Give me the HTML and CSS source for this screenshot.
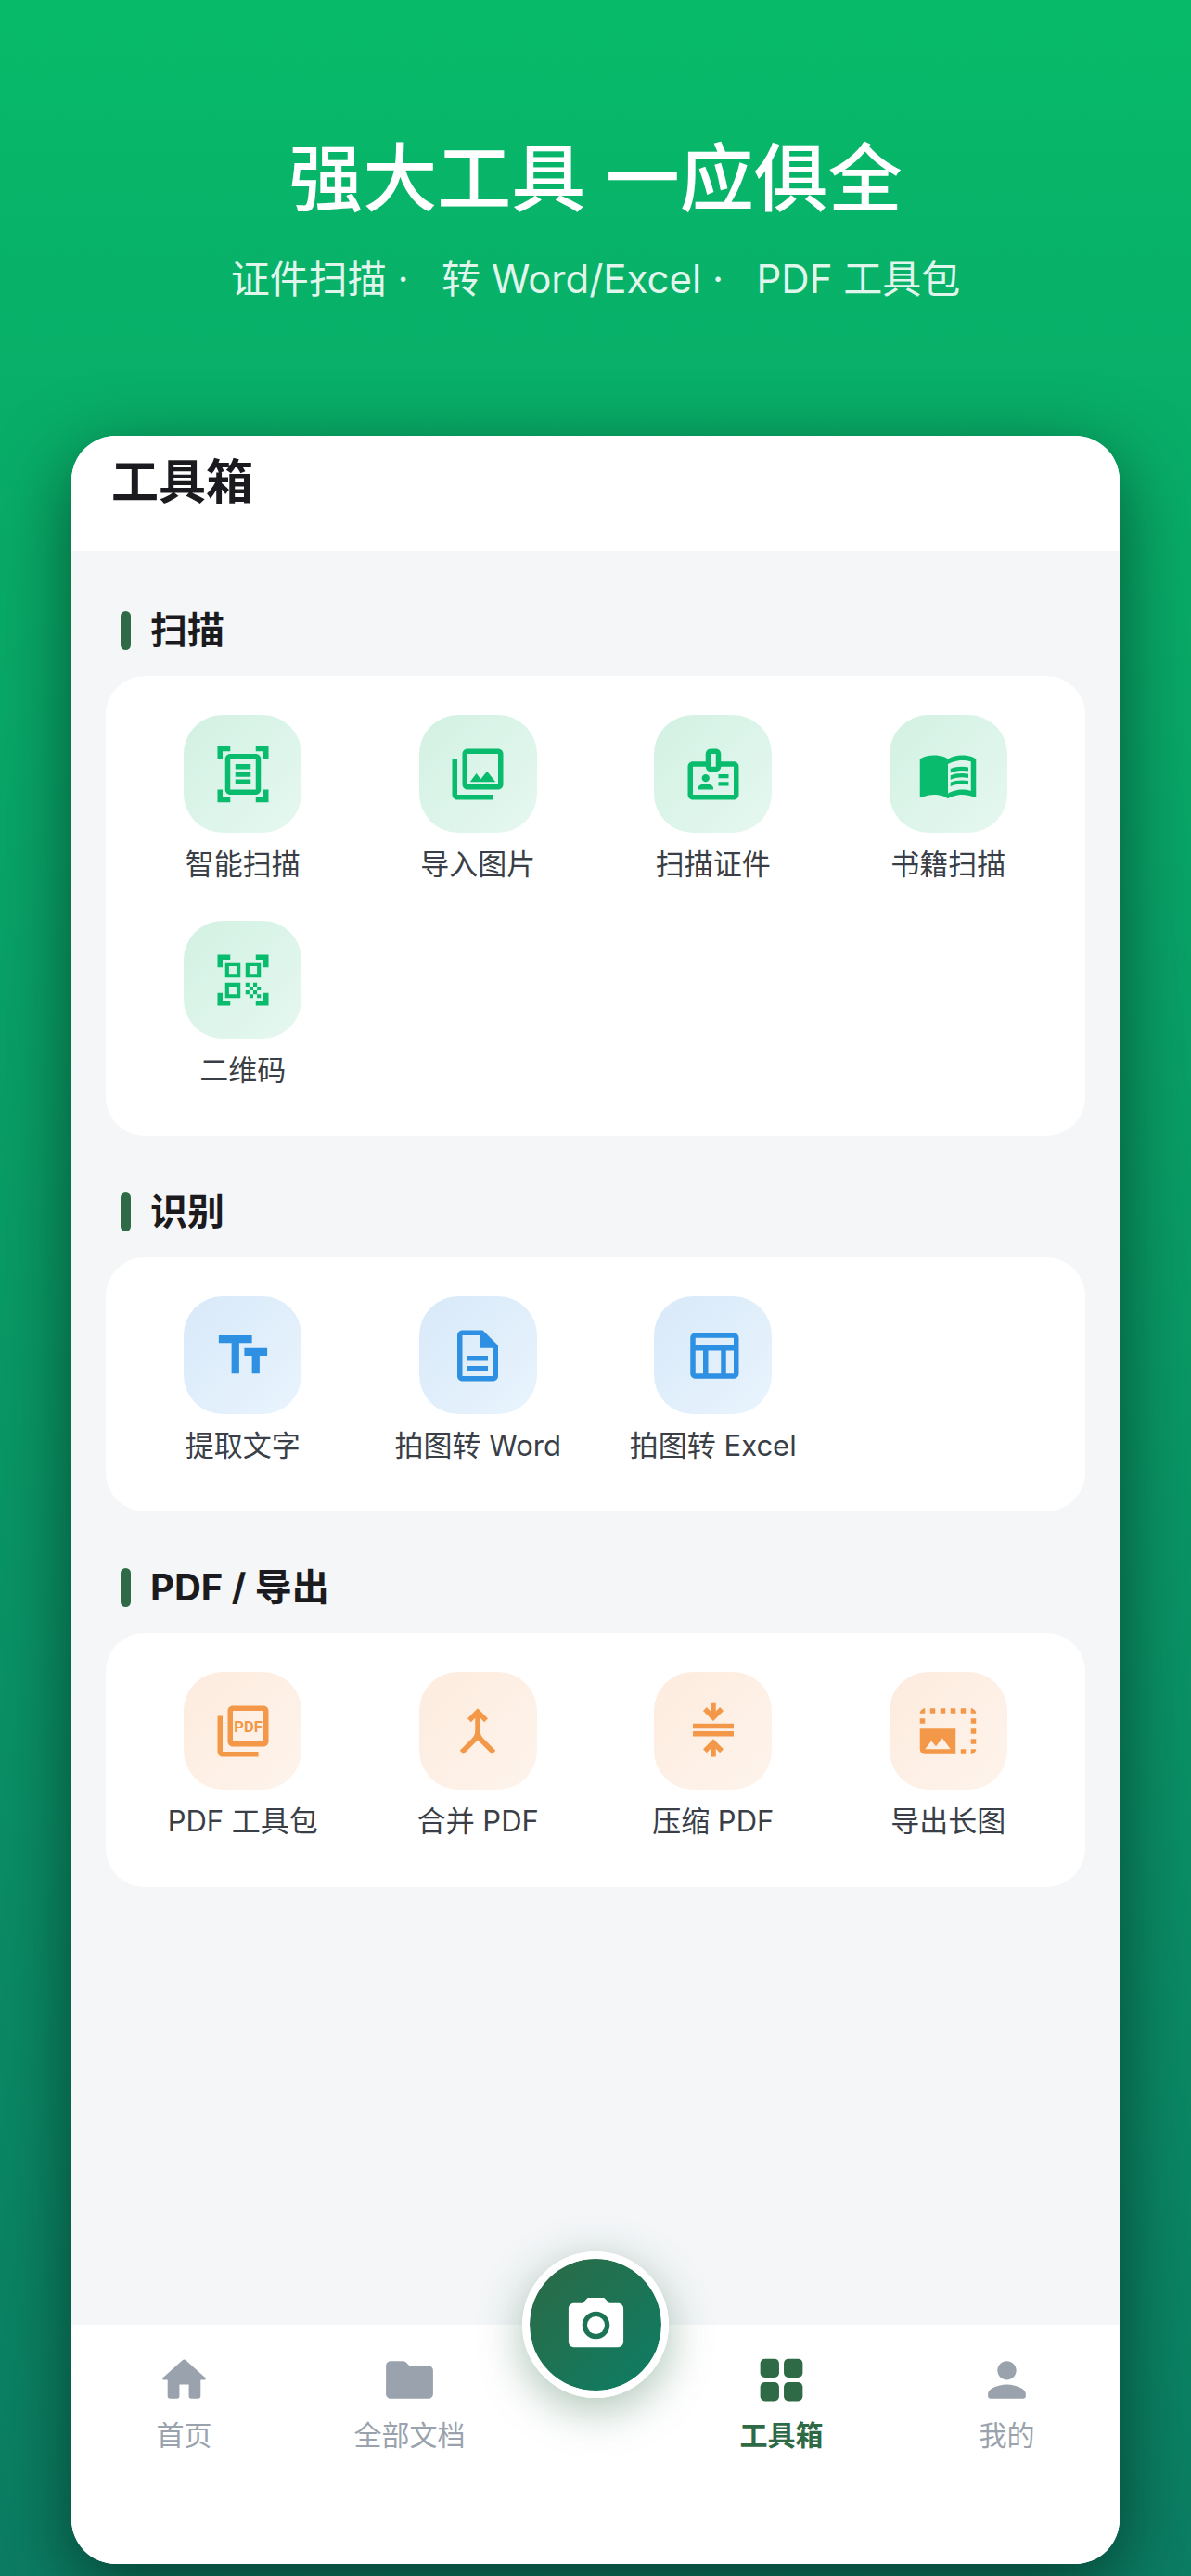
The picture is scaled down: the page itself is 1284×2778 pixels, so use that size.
FILE: index.html
```html
<!DOCTYPE html>
<html lang="zh-CN">
<head>
<meta charset="utf-8">
<meta name="viewport" content="width=device-width, initial-scale=1">
<title>工具箱</title>
<link rel="stylesheet" href="styles.css">
</head>
<body>
<div class="page">
  <header class="hero">
    <h1 class="hero-title">强大工具 一应俱全</h1>
    <p class="hero-sub">证件扫描 · &nbsp; 转 Word/Excel · &nbsp; PDF 工具包</p>
  </header>

  <div class="phone">
    <div class="topbar"><h2 class="topbar-title">工具箱</h2></div>

    <main class="content">
      <section class="section">
        <h3 class="section-title">扫描</h3>
        <div class="card tone-green">
          <button type="button" class="tool">
            <span class="tile"><svg class="icon" viewBox="0 0 24 24" fill-rule="evenodd" aria-hidden="true"><path d="M7 3H4v3H2V1h5v2zm15 3V1h-5v2h3v3h2zM7 21H4v-3H2v5h5v-2zm13-3v3h-3v2h5v-5h-2zM19 18c0 1.1-.9 2-2 2H7c-1.1 0-2-.9-2-2V6c0-1.1.9-2 2-2h10c1.1 0 2 .9 2 2v12zM17 6H7v12h10V6zM15 8H9v2h6V8zm0 3H9v2h6v-2zm0 3H9v2h6v-2z"/></svg></span>
            <span class="label">智能扫描</span>
          </button>
          <button type="button" class="tool">
            <span class="tile"><svg class="icon" viewBox="0 0 24 24" aria-hidden="true"><path d="M20 4v12H8V4h12m0-2H8c-1.1 0-2 .9-2 2v12c0 1.1.9 2 2 2h12c1.1 0 2-.9 2-2V4c0-1.1-.9-2-2-2zm-8.5 9.67l1.69 2.26 2.48-3.1L19 15H9zM2 6v14c0 1.1.9 2 2 2h14v-2H4V6H2z"/></svg></span>
            <span class="label">导入图片</span>
          </button>
          <button type="button" class="tool">
            <span class="tile"><svg class="icon" viewBox="0 0 24 24" aria-hidden="true"><path fill-rule="evenodd" d="M20 7h-5V4c0-1.1-.9-2-2-2h-2c-1.1 0-2 .9-2 2v3H4c-1.1 0-2 .9-2 2v11c0 1.1.9 2 2 2h16c1.1 0 2-.9 2-2V9c0-1.1-.9-2-2-2zM11 4h2v5h-2V4zm9 16H4V9h5c0 1.1.9 2 2 2h2c1.1 0 2-.9 2-2h5v11z"/><circle cx="9" cy="13.5" r="1.5"/><path d="M11.08 16.18C10.44 15.9 9.74 15.75 9 15.75s-1.44.15-2.08.43C6.36 16.42 6 16.96 6 17.57V18h6v-.43c0-.61-.36-1.15-.92-1.39zM14 12h4v1.5h-4zM14 15h4v1.5h-4z"/></svg></span>
            <span class="label">扫描证件</span>
          </button>
          <button type="button" class="tool">
            <span class="tile"><svg class="icon" viewBox="0 0 24 24" aria-hidden="true"><path fill-rule="evenodd" d="M21 5c-1.11-.35-2.33-.5-3.5-.5-1.95 0-4.05.4-5.5 1.5-1.45-1.1-3.55-1.5-5.5-1.5S2.45 4.9 1 6v14.65c0 .25.25.5.5.5.1 0 .15-.05.25-.05C3.1 20.45 5.05 20 6.5 20c1.95 0 4.05.4 5.5 1.5 1.35-.85 3.8-1.5 5.5-1.5 1.65 0 3.35.3 4.75 1.05.1.05.15.05.25.05.25 0 .5-.25.5-.5V6c-.6-.45-1.25-.75-2-1zm0 13.5c-1.1-.35-2.3-.5-3.5-.5-1.7 0-4.15.65-5.5 1.5V8c1.35-.85 3.8-1.5 5.5-1.5 1.2 0 2.4.15 3.5.5v11.5z"/><path d="M17.5 10.5c.88 0 1.73.09 2.5.26V9.24C19.21 9.09 18.36 9 17.5 9c-1.7 0-3.24.29-4.5.83v1.66c1.13-.64 2.7-.99 4.5-.99zM13 12.49v1.66c1.13-.64 2.7-.99 4.5-.99.88 0 1.73.09 2.5.26V11.9c-.79-.15-1.64-.24-2.5-.24-1.7 0-3.24.3-4.5.83zM17.5 14.33c-1.7 0-3.24.29-4.5.83v1.66c1.13-.64 2.7-.99 4.5-.99.88 0 1.73.09 2.5.26v-1.52c-.79-.16-1.64-.24-2.5-.24z"/></svg></span>
            <span class="label">书籍扫描</span>
          </button>
          <button type="button" class="tool">
            <span class="tile"><svg class="icon" viewBox="0 0 24 24" fill-rule="evenodd" aria-hidden="true"><path d="M5 5h6v6H5zM6.5 6.5v3h3v-3zM5 13h6v6H5zM6.5 14.5v3h3v-3zM13 5h6v6h-6zM14.5 6.5v3h3v-3zM13 13h1.5v1.5H13zM14.5 14.5H16V16h-1.5zM16 13h1.5v1.5H16zM13 16h1.5v1.5H13zM14.5 17.5H16V19h-1.5zM16 16h1.5v1.5H16zM17.5 14.5H19V16h-1.5zM17.5 17.5H19V19h-1.5zM22 7h-2V4h-3V2h5zM22 22v-5h-2v3h-3v2zM2 22h5v-2H4v-3H2zM2 2v5h2V4h3V2z"/></svg></span>
            <span class="label">二维码</span>
          </button>
        </div>
      </section>

      <section class="section">
        <h3 class="section-title">识别</h3>
        <div class="card tone-blue">
          <button type="button" class="tool">
            <span class="tile"><svg class="icon" viewBox="0 0 24 24" aria-hidden="true"><path d="M2.5 4v3h5v12h3V7h5V4h-13zm19 5h-9v3h3v7h3v-7h3V9z"/></svg></span>
            <span class="label">提取文字</span>
          </button>
          <button type="button" class="tool">
            <span class="tile"><svg class="icon" viewBox="0 0 24 24" aria-hidden="true"><path d="M8 16h8v2H8zm0-4h8v2H8zm6-10H6c-1.1 0-2 .9-2 2v16c0 1.1.89 2 1.99 2H18c1.1 0 2-.9 2-2V8l-6-6zm4 18H6V4h7v5h5v11z"/></svg></span>
            <span class="label">拍图转 Word</span>
          </button>
          <button type="button" class="tool">
            <span class="tile"><svg class="icon" viewBox="0 0 24 24" aria-hidden="true"><path fill-rule="evenodd" d="M20 3H5c-1.1 0-2 .9-2 2v14c0 1.1.9 2 2 2h15c1.1 0 2-.9 2-2V5c0-1.1-.9-2-2-2zm0 2v3H5V5h15zm-5 14h-5v-9h5v9zM5 10h3v9H5v-9zm12 9v-9h3v9h-3z"/></svg></span>
            <span class="label">拍图转 Excel</span>
          </button>
        </div>
      </section>

      <section class="section">
        <h3 class="section-title">PDF / 导出</h3>
        <div class="card tone-orange">
          <button type="button" class="tool">
            <span class="tile"><svg class="icon" viewBox="0 0 24 24" aria-hidden="true"><path d="M20 2H8c-1.1 0-2 .9-2 2v12c0 1.1.9 2 2 2h12c1.1 0 2-.9 2-2V4c0-1.1-.9-2-2-2zm0 14H8V4h12v12zM4 6H2v14c0 1.1.9 2 2 2h14v-2H4V6z"/><text class="icon-text" x="14" y="12.5" text-anchor="middle">PDF</text></svg></span>
            <span class="label">PDF 工具包</span>
          </button>
          <button type="button" class="tool">
            <span class="tile"><svg class="icon" viewBox="0 0 24 24" aria-hidden="true"><path d="M6.41 21L5 19.59l4.83-4.83c.75-.75 1.17-1.77 1.17-2.83v-5.1L9.41 8.41 8 7l4-4 4 4-1.41 1.41L13 6.83v5.1c0 1.06.42 2.08 1.17 2.83L19 19.59 17.59 21 12 15.41 6.41 21z"/></svg></span>
            <span class="label">合并 PDF</span>
          </button>
          <button type="button" class="tool">
            <span class="tile"><svg class="icon" viewBox="0 0 24 24" aria-hidden="true"><path d="M16 4l-1.41-1.41L13 4.17V1h-2v3.17L9.41 2.59 8 4l4 4zM4 9h16v2H4zM4 12h16v2H4zM8 19l1.41 1.41L11 18.83V22h2v-3.17l1.59 1.58L16 19l-4-4z"/></svg></span>
            <span class="label">压缩 PDF</span>
          </button>
          <button type="button" class="tool">
            <span class="tile"><svg class="icon" viewBox="0 0 24 24" aria-hidden="true"><path fill-rule="evenodd" d="M21 15h2v2h-2v-2zm0-4h2v2h-2v-2zm2 8h-2v2c1 0 2-1 2-2zM13 3h2v2h-2V3zm8 4h2v2h-2V7zm0-4v2h2c0-1-1-2-2-2zM1 7h2v2H1V7zm16-4h2v2h-2V3zm0 16h2v2h-2v-2zM3 3C2 3 1 4 1 5h2V3zm6 0h2v2H9V3zM5 3h2v2H5V3zm-4 8v8c0 1.1.9 2 2 2h12V11H1zm2 8l2.5-3.21 1.79 2.15 2.5-3.22L13 19H3z"/></svg></span>
            <span class="label">导出长图</span>
          </button>
        </div>
      </section>
    </main>

    <nav class="tabbar" aria-label="主导航">
      <a class="tab" href="#home">
        <svg class="tab-icon" viewBox="0 0 24 24" aria-hidden="true"><path d="M10 19v-5h4v5c0 .55.45 1 1 1h3c.55 0 1-.45 1-1v-7h1.7c.46 0 .68-.57.33-.87L12.67 3.6c-.38-.34-.96-.34-1.34 0l-8.36 7.53c-.34.3-.13.87.33.87H5v7c0 .55.45 1 1 1h3c.55 0 1-.45 1-1z"/></svg>
        <span>首页</span>
      </a>
      <a class="tab" href="#docs">
        <svg class="tab-icon" viewBox="0 0 24 24" aria-hidden="true"><path d="M10.59 4.59C10.21 4.21 9.7 4 9.17 4H4c-1.1 0-1.99.9-1.99 2L2 18c0 1.1.9 2 2 2h16c1.1 0 2-.9 2-2V8c0-1.1-.9-2-2-2h-8l-1.41-1.41z"/></svg>
        <span>全部文档</span>
      </a>
      <button type="button" class="fab" aria-label="拍照">
        <svg class="fab-icon" viewBox="0 0 24 24" aria-hidden="true"><circle cx="12" cy="12" r="3.2"/><path fill-rule="evenodd" d="M9 2L7.17 4H4c-1.1 0-2 .9-2 2v12c0 1.1.9 2 2 2h16c1.1 0 2-.9 2-2V6c0-1.1-.9-2-2-2h-3.17L15 2H9zm3 15c-2.76 0-5-2.24-5-5s2.24-5 5-5 5 2.24 5 5-2.24 5-5 5z"/></svg>
      </button>
      <a class="tab tab-active" href="#tools" aria-current="page">
        <svg class="tab-icon" viewBox="0 0 24 24" aria-hidden="true"><rect x="3" y="3" width="8" height="8" rx="2"/><rect x="13" y="3" width="8" height="8" rx="2"/><rect x="3" y="13" width="8" height="8" rx="2"/><rect x="13" y="13" width="8" height="8" rx="2"/></svg>
        <span>工具箱</span>
      </a>
      <a class="tab" href="#me">
        <svg class="tab-icon" viewBox="0 0 24 24" aria-hidden="true"><path d="M12 12c2.21 0 4-1.79 4-4s-1.79-4-4-4-4 1.79-4 4 1.79 4 4 4zm0 2c-2.67 0-8 1.34-8 4v1c0 .55.45 1 1 1h14c.55 0 1-.45 1-1v-1c0-2.66-5.33-4-8-4z"/></svg>
        <span>我的</span>
      </a>
    </nav>
  </div>
</div>
</body>
</html>
```
FILE: styles.css
```css
* {
  box-sizing: border-box;
}

body {
  margin: 0;
  font-family: Inter, "Noto Sans CJK SC", sans-serif;
  color: #1b1b1f;
}

h1, h2, h3, p {
  margin: 0;
}

button {
  font: inherit;
  color: inherit;
  padding: 0;
  border: 0;
  background: none;
  cursor: pointer;
}

svg {
  display: block;
  fill: currentColor;
}

.page {
  display: flex;
  flex-direction: column;
  min-height: 100vh;
  padding: 0 6% 13px;
  background: linear-gradient(180deg, #07ba6a 0%, #08ae68 16%, #0b7d63 100%);
}

.hero {
  padding: 132px 0 139px;
  text-align: center;
  color: #fff;
}

.hero-title {
  font-size: 80px;
  line-height: 120px;
  font-weight: 500;
}

.hero-sub {
  margin-top: 19px;
  font-size: 42px;
  line-height: 60px;
  color: rgba(255, 255, 255, 0.88);
}

.phone {
  flex: 1;
  display: flex;
  flex-direction: column;
  border-radius: 48px;
  background: #f4f6f8;
  box-shadow: 0 24px 80px rgba(0, 0, 0, 0.5);
}

.topbar {
  padding: 14px 43px 38px;
  border-radius: 48px 48px 0 0;
  background: #fff;
}

.topbar-title {
  font-size: 51px;
  line-height: 72px;
  font-weight: 700;
}

.content {
  flex: 1;
  display: flex;
  flex-direction: column;
  gap: 53px;
  padding: 57px 37px 100px;
}

.section {
  display: flex;
  flex-direction: column;
  gap: 20px;
}

.section-title {
  display: flex;
  align-items: center;
  gap: 21px;
  padding-left: 16px;
  font-size: 40px;
  line-height: 58px;
  font-weight: 700;
}

.section-title::before {
  content: "";
  width: 11px;
  height: 42px;
  border-radius: 6px;
  background: #2d6a45;
}

.card {
  display: grid;
  grid-template-columns: repeat(4, 1fr);
  row-gap: 32px;
  padding: 42px 21px;
  border-radius: 42px;
  background: #fff;
}

.tool {
  display: flex;
  flex-direction: column;
  align-items: center;
  gap: 12px;
  padding-bottom: 8px;
}

.tile {
  display: grid;
  place-items: center;
  width: 127px;
  height: 127px;
  border-radius: 42px;
}

.icon {
  width: 66px;
  height: 66px;
}

.icon-text {
  font: 700 6px Roboto, sans-serif;
}

.label {
  font-size: 31px;
  line-height: 43px;
  font-weight: 400;
  color: #3a3f47;
  white-space: nowrap;
}

.tone-green .tile {
  color: #09bb6c;
  background: linear-gradient(135deg, #d2f1e3, #e6f8f0);
}

.tone-blue .tile {
  color: #2e90e2;
  background: linear-gradient(135deg, #d8e9f9, #e9f4fd);
}

.tone-orange .tile {
  color: #f39848;
  background: linear-gradient(135deg, #fdebde, #fef4ec);
}

.tabbar {
  display: flex;
  align-items: flex-start;
  min-height: 258px;
  border-radius: 0 0 48px 48px;
  background: #fff;
}

.tab {
  flex: 1;
  display: flex;
  flex-direction: column;
  align-items: center;
  gap: 8px;
  padding-top: 29px;
  font-size: 30px;
  line-height: 43px;
  color: #9aa3ad;
  text-decoration: none;
}

.tab-active {
  color: #2d6a45;
  font-weight: 700;
}

.tab-icon {
  width: 61px;
  height: 61px;
}

.fab {
  display: grid;
  place-items: center;
  width: 158px;
  height: 158px;
  margin-top: -79px;
  border: 8px solid #fff;
  border-radius: 50%;
  color: #fff;
  background: linear-gradient(135deg, #2d6a45, #0c7d64) padding-box;
  box-shadow: 0 12px 48px rgba(45, 106, 69, 0.4);
}

.fab-icon {
  width: 71px;
  height: 71px;
}
```
